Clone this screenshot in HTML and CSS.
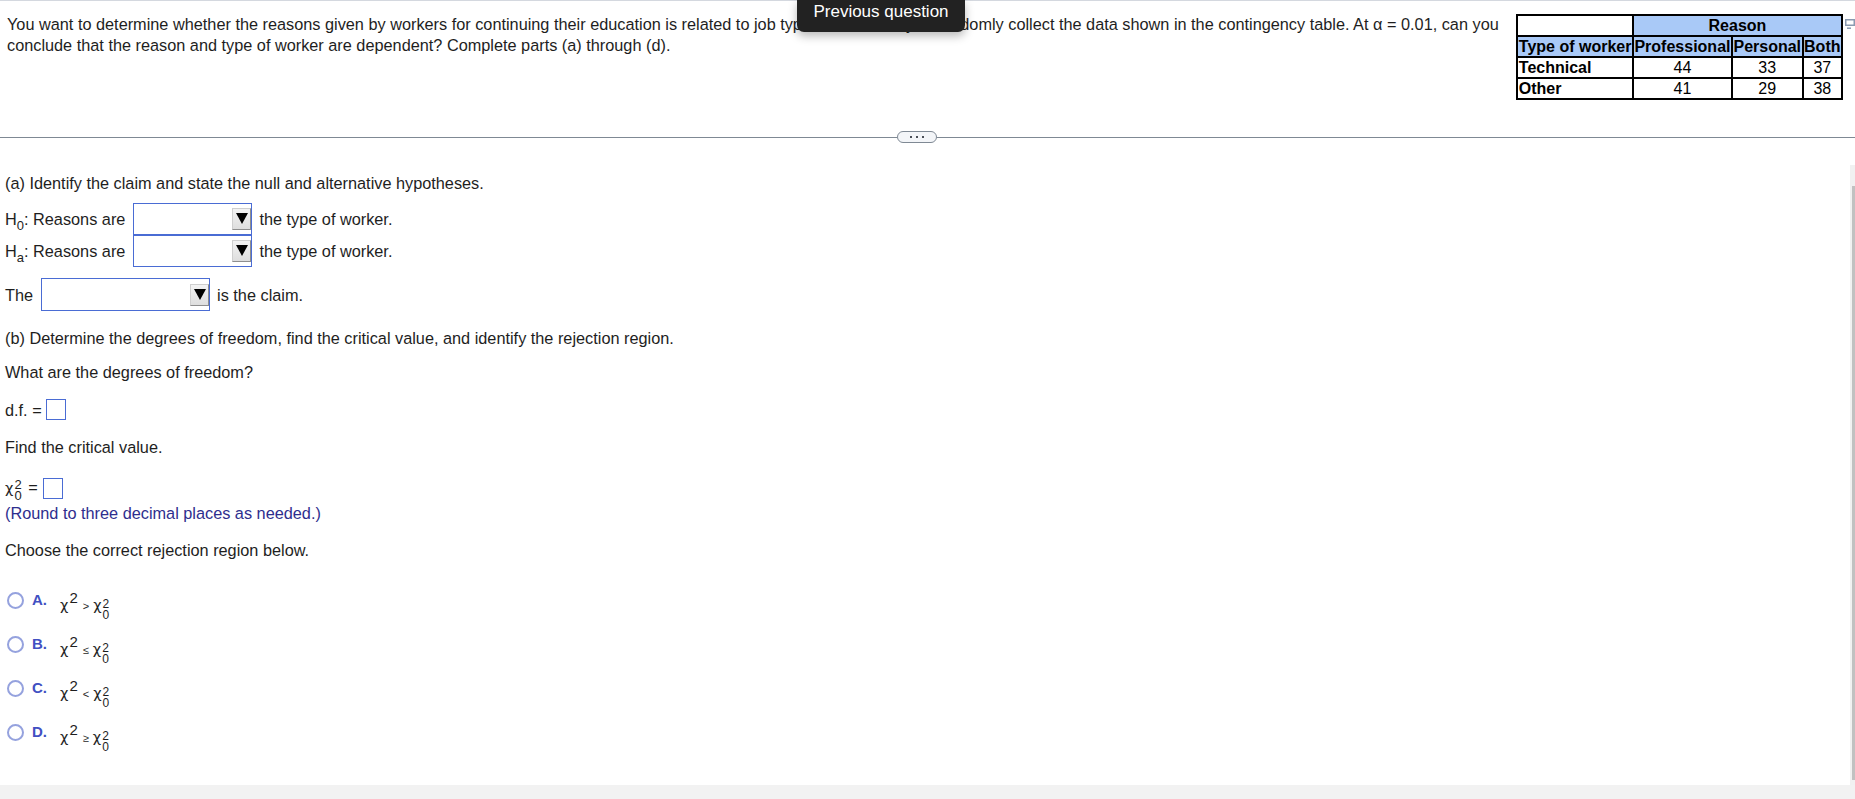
FILE: index.html
```html
<!DOCTYPE html>
<html>
<head>
<meta charset="utf-8">
<link rel="stylesheet" href="styles.css">
</head>
<body>
<div class="page">
  <div class="top">
    <p class="qtext">You want to determine whether the reasons given by workers for continuing their education is related to job type. So assume you randomly collect the data shown in the contingency table. At <span class="alpha">α</span> = 0.01, can you conclude that the reason and type of worker are dependent? Complete parts (a) through (d).</p>
    <table class="ct">
      <tr><th class="blank"></th><th class="blue" colspan="3">Reason</th></tr>
      <tr class="blue"><th class="lbl">Type of worker</th><th>Professional</th><th>Personal</th><th>Both</th></tr>
      <tr><th class="lbl">Technical</th><td>44</td><td>33</td><td>37</td></tr>
      <tr><th class="lbl">Other</th><td>41</td><td>29</td><td>38</td></tr>
    </table>
    <span class="popicon"><svg width="10" height="11" viewBox="0 0 10 11"><rect x="0.75" y="0.75" width="8.5" height="5.5" fill="none" stroke="#8a9ab0" stroke-width="1.5"/><path d="M2 9.2h4" stroke="#8a9ab0" stroke-width="1.5"/></svg></span>
  </div>
  <div class="tooltip">Previous question</div>
  <div class="divider"><span class="line first"></span><span class="pill"><i></i><i></i><i></i></span><span class="line rest"></span></div>
  <div class="pane">
    <div class="content">
      <p class="t pa">(a) Identify the claim and state the null and alternative hypotheses.</p>
      <div class="hrow first-h"><span class="t">H<span class="sub">0</span>: Reasons are</span><span class="sel w119"><span class="btn"><i class="tri"></i></span></span><span class="t">the type of worker.</span></div>
      <div class="hrow"><span class="t">H<span class="sub">a</span>: Reasons are</span><span class="sel w119"><span class="btn"><i class="tri"></i></span></span><span class="t">the type of worker.</span></div>
      <div class="hrow claim"><span class="t">The</span><span class="sel w169"><span class="btn"><i class="tri"></i></span></span><span class="t">is the claim.</span></div>
      <p class="t pb">(b) Determine the degrees of freedom, find the critical value, and identify the rejection region.</p>
      <p class="t pw">What are the degrees of freedom?</p>
      <div class="arow df"><span class="t">d.f. =</span><span class="box"></span></div>
      <p class="t pf">Find the critical value.</p>
      <div class="arow chirow"><span class="t"><span class="chi">χ</span><span class="ss"><span>2</span><span>0</span></span> <span class="eq">=</span></span><span class="box"></span></div>
      <p class="t round">(Round to three decimal places as needed.)</p>
      <p class="t pc">Choose the correct rejection region below.</p>
      <div class="options">
        <div class="opt"><span class="radio"></span><span class="olbl">A.</span><span class="math"><span class="chi">χ</span><span class="sq">2</span><span class="rel">&gt;</span><span class="chi">χ</span><span class="ss"><span>2</span><span>0</span></span></span></div>
        <div class="opt"><span class="radio"></span><span class="olbl">B.</span><span class="math"><span class="chi">χ</span><span class="sq">2</span><span class="rel">≤</span><span class="chi">χ</span><span class="ss"><span>2</span><span>0</span></span></span></div>
        <div class="opt"><span class="radio"></span><span class="olbl">C.</span><span class="math"><span class="chi">χ</span><span class="sq">2</span><span class="rel">&lt;</span><span class="chi">χ</span><span class="ss"><span>2</span><span>0</span></span></span></div>
        <div class="opt"><span class="radio"></span><span class="olbl">D.</span><span class="math"><span class="chi">χ</span><span class="sq">2</span><span class="rel">≥</span><span class="chi">χ</span><span class="ss"><span>2</span><span>0</span></span></span></div>
      </div>
    </div>
    <div class="scroll"><div class="thumb"></div></div>
  </div>
  <div class="footer"></div>
</div>
</body>
</html>
```

FILE: styles.css
```css
html, body {
  margin: 0;
  padding: 0;
  background: #ffffff;
}
body {
  width: 1855px;
  height: 799px;
  overflow: hidden;
  font-family: "Liberation Sans", Arial, sans-serif;
  font-size: 16.3px;
  color: #1e1e1e;
}
.page {
  position: relative;
  width: 1855px;
  height: 799px;
  display: flex;
  flex-direction: column;
}
.top {
  box-sizing: border-box;
  height: 131px;
  border-top: 1px solid #d4d8df;
  padding: 13px 0 0 7px;
  display: flex;
  align-items: flex-start;
}
.qtext {
  margin: 0;
  flex: 1;
  padding-right: 8px;
  line-height: 21px;
}
.ct {
  border-collapse: collapse;
  border: 2px solid #000;
  flex: none;
  font-size: 16px;
  line-height: 19px;
  color: #000;
}
.ct th, .ct td {
  border: 2px solid #000;
  padding: 0 0.5px;
  text-align: center;
  white-space: nowrap;
}
.ct th { font-weight: bold; }
.ct td { font-weight: normal; }
.ct .lbl { text-align: left; }
.ct .blank { background: #ffffff; }
.ct .blue, .ct tr.blue th { background: #a9c9f7; }
.popicon {
  width: 12px;
  display: flex;
  justify-content: flex-end;
  margin-top: 5px;
}
.popicon svg { display: block; }
.tooltip {
  position: absolute;
  left: 797px;
  top: 0;
  width: 168px;
  height: 32px;
  box-sizing: border-box;
  background: #222222;
  color: #ffffff;
  font-size: 17px;
  line-height: 24px;
  text-align: center;
  border-radius: 0 0 7px 7px;
  box-shadow: 0 4px 10px rgba(0, 0, 0, 0.28);
  z-index: 5;
}
.divider {
  height: 12px;
  display: flex;
  align-items: center;
}
.line {
  height: 1px;
  background: #7f8994;
  margin-top: 1px;
}
.line.first { width: 897px; }
.line.rest { flex: 1; }
.pill {
  box-sizing: border-box;
  width: 40px;
  height: 12px;
  border: 1px solid #7f8994;
  border-radius: 6px;
  background: #f3f5f8;
  display: flex;
  align-items: center;
  justify-content: center;
  gap: 4px;
}
.pill i {
  width: 2px;
  height: 2px;
  background: #4a4f57;
  display: block;
}
.pane {
  height: 642px;
  display: flex;
}
.content {
  flex: 1;
  padding: 30px 0 0 5px;
}
.t { line-height: 20px; }
p.t { margin: 0; }
.hrow {
  display: flex;
  align-items: center;
  height: 32px;
  gap: 8px;
}
.hrow.first-h { margin-top: 10px; }
.hrow.claim { margin-top: 11px; height: 33px; }
.hrow .t:last-child { margin-left: -1px; }
.sub {
  font-size: 13px;
  vertical-align: -5px;
  line-height: 0;
}
.sel {
  box-sizing: border-box;
  height: 100%;
  border: 1px solid #4a6cd4;
  background: #fff;
  display: flex;
  justify-content: flex-end;
  align-items: center;
}
.w119 { width: 119px; }
.w169 { width: 169px; }
.btn {
  box-sizing: border-box;
  width: 19px;
  height: 22px;
  background: linear-gradient(#f3f3f3, #dedede);
  border: 1px solid #cfcfcf;
  border-right-color: #8e8e8e;
  border-bottom-color: #8e8e8e;
  display: flex;
  align-items: center;
  justify-content: center;
}
.tri {
  display: block;
  width: 0;
  height: 0;
  border-left: 6px solid transparent;
  border-right: 6px solid transparent;
  border-top: 11px solid #000;
  margin-top: -1px;
}
.pb { margin-top: 17px !important; }
.pw { margin-top: 14px !important; }
.arow {
  display: flex;
  align-items: center;
  height: 21px;
  gap: 4px;
}
.arow.df { margin-top: 17px; }
.arow.chirow { margin-top: 21px; gap: 5px; }
.box {
  box-sizing: border-box;
  width: 20px;
  height: 21px;
  border: 1px solid #4a6cd4;
  background: #fff;
}
.pf { margin-top: 17px !important; }
.round { margin-top: 4px !important; color: #2e2e8e; }
.pc { margin-top: 17px !important; }
.chi {
  font-family: "DejaVu Sans", "Noto Sans", sans-serif;
  font-size: 14.5px;
  line-height: 1;
}
.ss {
  display: inline-flex;
  flex-direction: column;
  font-size: 12px;
  line-height: 10.5px;
  vertical-align: 2px;
  margin-left: 1px;
}
.chirow .ss { line-height: 11px; vertical-align: 4px; font-size: 13px; }
.eq { margin-left: 2px; }
.options { margin-top: 24px; }
.opt {
  height: 32px;
  display: flex;
  align-items: flex-start;
  margin-bottom: 12px;
}
.radio {
  box-sizing: border-box;
  width: 17px;
  height: 17px;
  border: 2px solid #95a2de;
  border-radius: 50%;
  background: #fff;
  margin: 8px 0 0 2px;
}
.olbl {
  width: 28px;
  margin: 7px 0 0 8px;
  font-size: 15px;
  font-weight: bold;
  line-height: 17px;
  color: #4150c2;
}
.math {
  margin-top: 11px;
  line-height: 20px;
  font-size: 16px;
  white-space: nowrap;
}
.sq {
  font-size: 15px;
  vertical-align: 7px;
  line-height: 0;
  margin-left: 1px;
}
.rel {
  font-size: 11px;
  margin: 0 4px 0 5px;
}
.scroll {
  width: 5px;
  margin-top: 22px;
  background: #f1f1f1;
  display: flex;
  justify-content: flex-end;
  align-items: flex-start;
}
.thumb {
  width: 3px;
  height: 594px;
  margin-top: 21px;
  background: #c1c1c1;
}
.footer {
  height: 14px;
  background: #f2f2f2;
}
```
